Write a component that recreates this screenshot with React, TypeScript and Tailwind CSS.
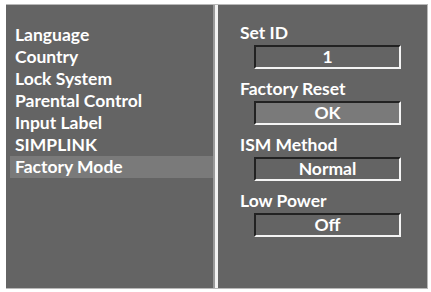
import React from 'react';

const menu = ['Language', 'Country', 'Lock System', 'Parental Control', 'Input Label', 'SIMPLINK', 'Factory Mode'];

const options = [
  { label: 'Set ID', value: '1', active: false },
  { label: 'Factory Reset', value: 'OK', active: true },
  { label: 'ISM Method', value: 'Normal', active: false },
  { label: 'Low Power', value: 'Off', active: false },
];

export default function App() {
  return (
    <div className="w-[431px] h-[292px] bg-white pl-[6px] pt-[4px]" style={{ fontFamily: 'Lato, "Open Sans", sans-serif' }}>
      <div className="w-[422px] h-[285px] flex bg-[#646464] border-r border-b border-t border-[#b8b8b8] text-white font-bold">
        {/* left menu */}
        <div className="w-[207px] pt-[19px] pl-[4px]">
          {menu.map((item) => (
            <div
              key={item}
              className={`h-[22px] pl-[5px] text-[17.5px] leading-[22px] ${item === 'Factory Mode' ? 'bg-[#7a7a7a]' : ''}`}
            >
              {item}
            </div>
          ))}
        </div>
        {/* divider */}
        <div className="w-[5px] flex">
          <div className="w-[2px] bg-[#9a9a9a]" />
          <div className="w-[3px] bg-[#f2f2f2]" />
        </div>
        {/* right options */}
        <div className="flex-1 pt-[18px] pl-[22px] flex flex-col gap-[10px]">
          {options.map((o) => (
            <div key={o.label} className="flex flex-col gap-[2px]">
              <div className="h-[20px] text-[17.5px] leading-[20px]">{o.label}</div>
              <div
                className={`ml-[14px] w-[147px] h-[24px] border-t-2 border-l-2 border-t-[#222] border-l-[#222] border-b-2 border-r-2 border-b-[#f4f4f4] border-r-[#f4f4f4] flex items-center justify-center text-[17.5px] ${o.active ? 'bg-[#7a7a7a]' : ''}`}
              >
                {o.value}
              </div>
            </div>
          ))}
        </div>
      </div>
    </div>
  );
}
